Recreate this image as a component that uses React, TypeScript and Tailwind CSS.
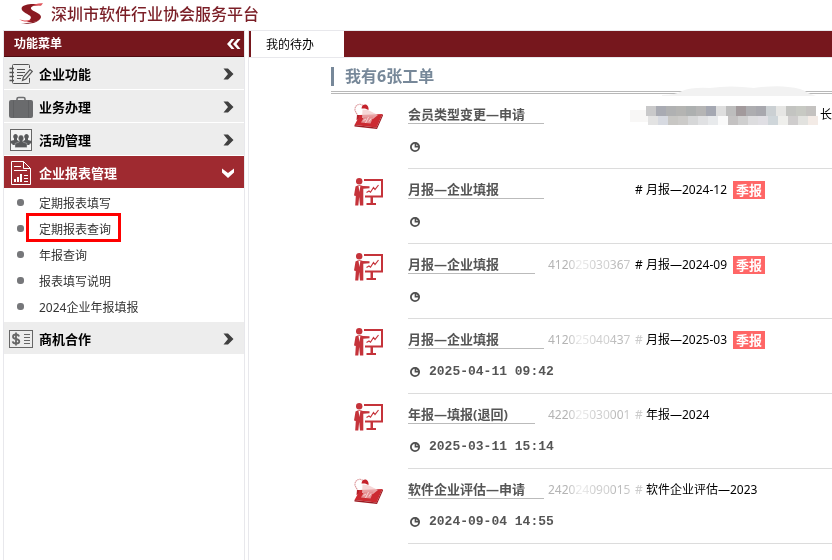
import React from "react";

function Logo() {
  return (
    <svg viewBox="0 0 72 63" className="h-[21px] w-6" aria-hidden="true">
      <path d="M66 6C46 0 14 2 8 14C5 25 24 31 33 38C39 43 34 51 24 56C45 60 65 53 66 42C67 31 40 25 36 17C34 10 47 7 66 6Z" fill="#8a1a22" />
      <path d="M72 1C58 0 48 3 40 8C50 7 60 8 66 8Z" fill="#e0555c" />
      <path d="M0 48C10 53 24 54 36 50C30 58 14 58 0 48Z" fill="#e0454d" />
      <path d="M6 61C22 64 48 63 60 51C50 57 28 60 6 61Z" fill="#8a1a22" />
    </svg>
  );
}

function NotebookIcon() {
  return (
    <svg viewBox="0 0 24 22" className="h-[22px] w-6" fill="none" stroke="#555" aria-hidden="true">
      <path d="M20.500 5V2.500Q20.500 1.500 19.500 1.500H4.500Q3.500 1.500 3.500 2.500V19.500Q3.500 20.500 4.500 20.500H19.500Q20.500 20.500 20.500 19.500V15" />
      <path d="M0.500 5.500H5M0.500 9.500H5M0.500 13.500H5M0.500 17.500H5" strokeWidth="1.600" />
      <path d="M8 6.500H16M8 9.500H16M8 12.500H14M8 15.500H12" />
      <path d="M13.500 17.500L14.500 14L21 6.500L23.300 8.500L16.800 16Z" fill="#ededed" strokeWidth="1.200" />
    </svg>
  );
}

function BriefcaseIcon() {
  return (
    <svg viewBox="0 0 24 22" className="h-[22px] w-6" aria-hidden="true">
      <path d="M8 5V3Q8 1.500 9.500 1.500H14.500Q16 1.500 16 3V5" fill="none" stroke="#6d6e70" strokeWidth="1.600" />
      <path d="M2 4H22Q24 4 24 6V20Q24 22 22 22H2Q0 22 0 20V6Q0 4 2 4Z" fill="#6a6b6d" />
      <path d="M4.500 4.500V21.500M19.500 4.500V21.500" stroke="#5f6062" />
    </svg>
  );
}

function PeopleIcon() {
  return (
    <svg viewBox="0 0 24 22" className="h-[22px] w-6" aria-hidden="true">
      <rect x="1.500" y="0.500" width="21" height="21" fill="#f4f4f4" stroke="#666" />
      <g fill="#58595b">
        <path d="M6.500 5A2.600 2.600 0 0 1 8 9.500V11L11 12.500V16H3.500V15L1.500 14V12L5 11V9.500A2.600 2.600 0 0 1 6.500 5Z" />
        <path d="M17.500 5A2.600 2.600 0 0 0 16 9.500V11L13 12.500V16H20.500V15L22.500 14V12L19 11V9.500A2.600 2.600 0 0 0 17.500 5Z" />
        <path d="M12 6A3 3.200 0 0 1 13.800 11.500V13L18 14.500V18.500H6V14.500L10.200 13V11.500A3 3.200 0 0 1 12 6Z" stroke="#d8d8d8" strokeWidth="0.400" />
      </g>
    </svg>
  );
}

function ReportIcon() {
  return (
    <svg viewBox="0 0 24 26" className="h-[26px] w-6" fill="none" stroke="#fff" aria-hidden="true">
      <path d="M14.500 1.500H2.500V24.500H21.500V8.500L14.500 1.500V8.500H21.500" />
      <path d="M5 6.500H12M5 10.500H18" />
      <path d="M6 19V22M9 17V22M12 14V22" strokeWidth="2" />
      <path d="M15 15.500H19M15 18.500H19M15 21.500H19" />
    </svg>
  );
}

function MoneyIcon() {
  return (
    <svg viewBox="0 0 24 18" className="h-[18px] w-6" fill="none" stroke="#666" aria-hidden="true">
      <rect x="0.500" y="0.500" width="23" height="17" />
      <path d="M10 6.500Q9.500 4.500 7 4.500Q4 4.500 4 6.700Q4 8.500 7 9Q10.300 9.500 10.300 11.500Q10.300 13.500 7 13.500Q4 13.500 3.700 11.300M7 2.500V15.500" strokeWidth="1.800" />
      <path d="M15 4.500H21M15 7.500H21M15 10.500H21M15 13.500H21" />
    </svg>
  );
}

function ChevronRight() {
  return (
    <svg viewBox="0 0 11 12" className="h-3 w-[11px]" fill="#404040" aria-hidden="true">
      <path d="M0.500 0.500H5L10.500 6L5 11.500H0.500L5 6Z" />
    </svg>
  );
}

function ChevronDown() {
  return (
    <svg viewBox="0 0 12 10" className="h-[10px] w-3" fill="#fff" aria-hidden="true">
      <path d="M0 0.500L6 5L12 0.500V4.500L6 10L0 4.500Z" />
    </svg>
  );
}

function CollapseIcon() {
  return (
    <svg viewBox="0 0 14 10" className="h-[10px] w-[14px]" fill="#fff" aria-hidden="true">
      <path d="M4.500 0H7.500L3.500 5L7.500 10H4.500L0 5Z M10.500 0H13.500L9.500 5L13.500 10H10.500L6 5Z" />
    </svg>
  );
}

function PresenterIcon() {
  return (
    <svg viewBox="0 0 29 28" className="h-7 w-[29px]" aria-hidden="true">
      <g fill="#c5333a">
        <circle cx="5.200" cy="3.200" r="3.200" />
        <path d="M1.500 8.500Q5 6.500 9 8L15.500 8.300V10.300L9.300 10.800V27.500H6L5.200 19L4.300 27.500H1.200L1.800 18L0 17.500Z" />
        <path d="M10 1H29V19.500H19V25H22V27H12.500V25H16.500V19.500H11V17.500H27V3H10Z" />
      </g>
      <path d="M4.500 8L5.500 14L6.300 8" fill="#fff" />
      <path d="M12.500 14.500L15 13L16.500 14.200L19.500 9.500L21 11.500L24.500 7" fill="none" stroke="#c5333a" strokeWidth="1.200" />
    </svg>
  );
}

function DeskLampIcon() {
  return (
    <svg viewBox="0 0 29 26" className="h-[26px] w-[29px]" aria-hidden="true">
      <path d="M5 15L1 7.500Q0.500 2 6 1.200L9 2.200" fill="none" stroke="#dd9a9d" strokeWidth="1.100" strokeDasharray="1.600 0.500" />
      <path d="M3 12L6 12L5.500 16L2.500 17Z" fill="#b3212a" />
      <path d="M6 12L28.500 11L22.500 24.500L0.500 22Z" fill="#cc2a31" />
      <path d="M0.500 22L22.500 24.500L28.500 11L29 12.500L23 26L0.500 23.500Z" fill="#9c1a21" />
      <path d="M8.500 6.500L14 7L24 12L19 16L8 15Z" fill="#f3c9ca" opacity="0.750" />
      <path d="M10 14L19.500 13.500L16.500 20.500L7 19.500Z" fill="#e58f92" />
      <path d="M14.500 14L11.500 20M9.500 17.500L12 16M15 18.500L17 15.500" stroke="#f9dcdc" strokeWidth="0.900" />
      <path d="M7.500 5.500Q8 1 12 1.500Q15 3 14.500 7L11 5.500Z" fill="#c4222b" />
    </svg>
  );
}

function ClockIcon() {
  return (
    <svg viewBox="0 0 10 10" className="h-[10px] w-[10px]" aria-hidden="true">
      <circle cx="5" cy="5" r="4.100" fill="#fff" stroke="#505050" strokeWidth="1.800" />
      <path d="M4.600 0.500A4.500 4.500 0 0 1 9.500 5.500H4.600Z" fill="#505050" />
      <path d="M6.200 2.200Q7.600 2.700 7.900 4H6.200Z" fill="#ddd" />
    </svg>
  );
}

function Mosaic() {
  const top = ["#c9c9ca", "#a9abb3", "#b0b1b2", "#b4b4b2", "#adb0b0", "#b5b5b5", "#a5a8b2", "#dedede", "#bdbdbd", "#a29a9c", "#adadb0", "#a8a8ae", "#cbd0d3", "#e6e6e4", "#c3c4c1", "#c7c9c3", "#c4c2c0"];
  const low = ["#e3e3e3", "#d7dae1", "#c8c7c4", "#cccbc9", "#d6d7d8", "#e0e1e3", "#e8eaec", "#fafafa", "#c4c2c2", "#cfcfcf", "#dddddf", "#e0dfe4", "#cfd6da", "#efefec", "#cfcdcd", "#e2e2df", "#f3ebe6"];
  return (
    <svg viewBox="0 0 192 40" className="h-10 w-48" aria-hidden="true">
      <path d="M32 9Q46 9 52 5Q62 1 80 2Q100 -1 124 2Q146 -1 158 1Q172 2 178 7L186 10H32Z" fill="#f2f2f2" />
      <rect x="0" y="24" width="22" height="12" fill="#f8f7f6" />
      {top.map((c, i) => (
        <rect key={"t" + i} x={16 + i * 10} y="20" width="10" height="10" fill={c} />
      ))}
      {low.map((c, i) => (
        <rect key={"l" + i} x={18 + i * 10} y="30" width="10" height="9" fill={c} />
      ))}
    </svg>
  );
}

const SUB_ITEMS = ["定期报表填写", "定期报表查询", "年报查询", "报表填写说明", "2024企业年报填报"];

type MenuItemProps = { label: string; icon: React.ReactNode; open?: boolean };

function MenuItem({ label, icon, open = false }: MenuItemProps) {
  return (
    <button
      type="button"
      aria-expanded={open}
      className={
        "mb-px flex h-8 w-full items-center pt-px pr-[10px] pl-[5px] text-[13px] font-bold " +
        (open ? "bg-[#9f2a30] text-white" : "bg-[#ededed] text-black")
      }
    >
      <span className="flex w-[30px] items-center">{icon}</span>
      <span className="flex-1 pt-[3px] text-left">{label}</span>
      <span className="flex w-3 justify-center">{open ? <ChevronDown /> : <ChevronRight />}</span>
    </button>
  );
}

type Order = {
  title: string;
  kind: "lamp" | "board";
  line: string;
  number?: string;
  hash?: "solid" | "faint";
  text?: string;
  badge?: boolean;
  time?: string;
};

const ORDERS: Order[] = [
  { title: "会员类型变更—申请", kind: "lamp", line: "w-[136px]" },
  { title: "月报—企业填报", kind: "board", line: "w-[136px]", hash: "solid", text: "月报—2024-12", badge: true },
  { title: "月报—企业填报", kind: "board", line: "w-[127px]", number: "412025030367", hash: "solid", text: "月报—2024-09", badge: true },
  { title: "月报—企业填报", kind: "board", line: "w-[136px]", number: "412025040437", hash: "faint", text: "月报—2025-03", badge: true, time: "2025-04-11 09:42" },
  { title: "年报—填报(退回)", kind: "board", line: "w-[127px]", number: "422025030001", hash: "faint", text: "年报—2024", time: "2025-03-11 15:14" },
  { title: "软件企业评估—申请", kind: "lamp", line: "w-[136px]", number: "242024090015", hash: "faint", text: "软件企业评估—2023", time: "2024-09-04 14:55" },
];

function OrderRow({ order }: { order: Order }) {
  return (
    <li className="flex h-[75px] pl-[23px]">
      <div className="w-[54px] shrink-0 pt-[9px]">{order.kind === "lamp" ? <DeskLampIcon /> : <PresenterIcon />}</div>
      <div className="relative min-w-0 flex-1 border-b border-[#dcdcdc]">
        <div className="flex h-[30px] items-end whitespace-nowrap">
          <h3 className="w-[140px] shrink-0">
            <a
              href="#order"
              className={"block h-5 border-b border-[#bbb] text-[13px] leading-5 font-bold text-[#555] " + order.line}
            >
              {order.title}
            </a>
          </h3>
          {order.text ? (
            <p className="flex h-[19px] items-center text-xs text-black">
              <span className="w-[87px] text-[#b4b4b4] blur-[0.5px] [mask-image:linear-gradient(90deg,#000_0,#000_22%,#0004_36%,#0005_44%,#000b_56%,#0008_66%,#000_80%,#0008_100%)]">
                {order.number}
              </span>
              <span className={"w-[11px] " + (order.hash === "faint" ? "text-[#ccc] blur-[0.5px]" : "")}>#</span>
              <span>{order.text}</span>
              {order.badge && (
                <span className="ml-[6px] bg-[#ff6666] px-[3px] text-[13px] leading-[18px] font-bold text-white">季报</span>
              )}
            </p>
          ) : (
            <p className="-mr-3 ml-auto h-[19px] text-xs leading-5 text-black">长单</p>
          )}
        </div>
        {!order.text && (
          <div className="absolute -top-2 right-[10px]">
            <Mosaic />
          </div>
        )}
        <div className="flex h-11 items-center gap-[9px] pt-px pl-[2px] font-['Liberation_Mono',monospace] text-[13px] font-bold text-[#555]">
          <ClockIcon />
          {order.time && <time className="pt-px">{order.time}</time>}
        </div>
      </div>
    </li>
  );
}

export default function App() {
  return (
    <div className="flex min-h-screen flex-col overflow-x-hidden bg-white font-['Noto_Sans','Noto_Sans_CJK_SC',sans-serif]">
      <header className="flex h-[30px] items-center gap-2 pb-[3px] pl-[19px]">
        <Logo />
        <h1 className="text-base leading-6 font-medium text-[#7b1f27]">深圳市软件行业协会服务平台</h1>
      </header>

      <div className="flex flex-1 gap-[3px] pl-[3px]">
        <aside className="w-[242px] shrink-0 border-x border-t border-[#e8e8ec]">
          <div className="flex h-[26px] items-center justify-between border-b border-[#4f0b10] bg-[#76171d] pr-[3px] pl-[10px]">
            <h2 className="text-xs font-bold text-white">功能菜单</h2>
            <button type="button" aria-label="收起菜单">
              <CollapseIcon />
            </button>
          </div>
          <nav>
            <MenuItem label="企业功能" icon={<NotebookIcon />} />
            <MenuItem label="业务办理" icon={<BriefcaseIcon />} />
            <MenuItem label="活动管理" icon={<PeopleIcon />} />
            <MenuItem label="企业报表管理" icon={<ReportIcon />} open />
            <ul className="mb-px py-px">
              {SUB_ITEMS.map((item, i) => (
                <li key={item} className="relative">
                  <a href="#report" className="flex h-[26px] items-center pl-[13px] text-xs text-[#333]">
                    <span className="mr-[15px] mb-[2px] h-[7px] w-[7px] rounded-[3px] bg-[#76777a]" />
                    <span className="pt-[2px]">{item}</span>
                  </a>
                  {i === 1 && <span className="absolute -top-[3px] bottom-0 left-[22px] w-[95px] border-[3px] border-[#fe0000]" />}
                </li>
              ))}
            </ul>
            <MenuItem label="商机合作" icon={<MoneyIcon />} />
          </nav>
        </aside>

        <main className="min-w-0 flex-1 border-t border-l border-[#e8e8ec]">
          <div className="flex h-[26px] bg-[#76171d] pl-[2px]">
            <button type="button" className="w-[93px] bg-white pt-px pr-[15px] text-xs text-black">
              我的待办
            </button>
          </div>
          <section className="border-t border-[#e8e8ec] pl-[82px]">
            <div className="flex h-9 items-center border-b-[3px] border-double border-[#b8b8b8] pt-1">
              <h2 className="border-l-[3px] border-[#778899] pl-[11px] text-base leading-[19px] font-bold text-[#778899]">
                我有6张工单
              </h2>
            </div>
            <ul>
              {ORDERS.map((order, i) => (
                <OrderRow key={i} order={order} />
              ))}
            </ul>
          </section>
        </main>
      </div>
    </div>
  );
}
